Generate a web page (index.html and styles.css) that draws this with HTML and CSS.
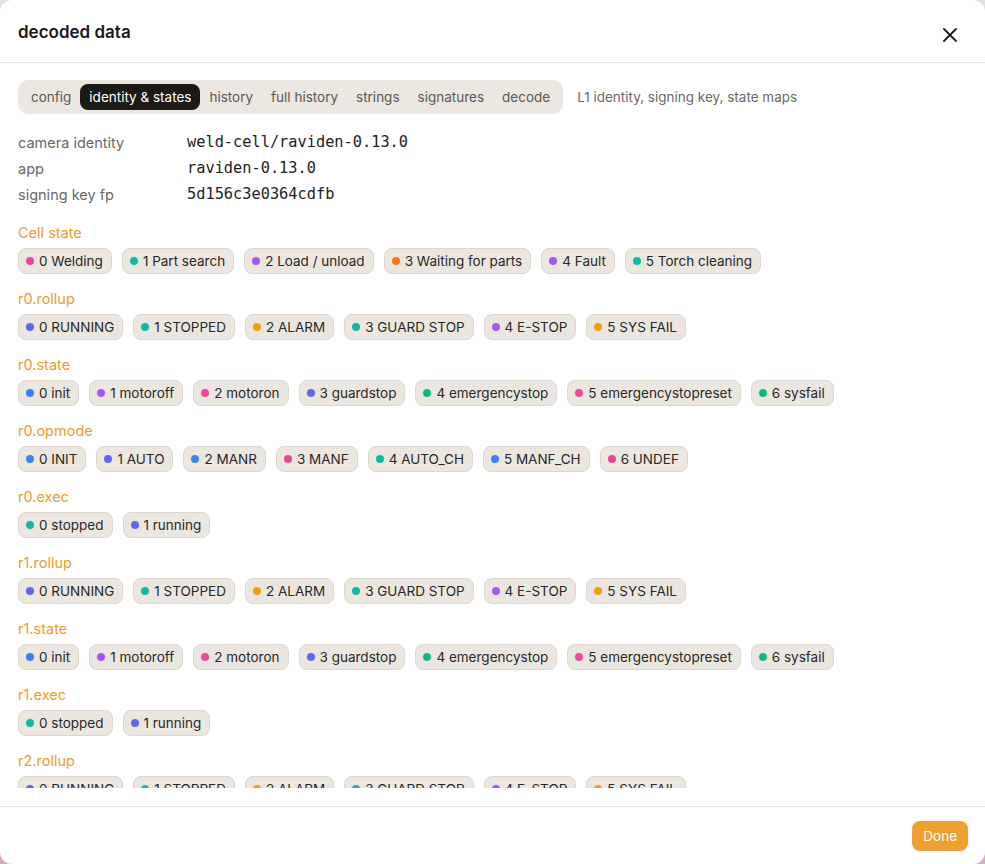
FILE: index.html
```html
<!DOCTYPE html>
<html lang="en">
<head>
<meta charset="utf-8">
<title>decoded data</title>
<link rel="stylesheet" href="styles.css">
</head>
<body>
<div class="dialog">
  <header class="dialog-head">
    <h1 class="dialog-title">decoded data</h1>
    <button class="close-btn" aria-label="Close">
      <svg width="14" height="14" viewBox="0 0 14 14"><path d="M1 1L13 13M13 1L1 13" stroke="#1c1c1c" stroke-width="1.8" stroke-linecap="round"/></svg>
    </button>
  </header>

  <main class="dialog-body">
    <div class="scroll">
      <div class="tabs-row">
        <nav class="tabs">
          <span class="tab">config</span>
          <span class="tab active">identity &amp; states</span>
          <span class="tab">history</span>
          <span class="tab">full history</span>
          <span class="tab">strings</span>
          <span class="tab">signatures</span>
          <span class="tab">decode</span>
        </nav>
        <span class="tabs-desc">L1 identity, signing key, state maps</span>
      </div>

      <dl class="kv">
        <dt>camera identity</dt><dd>weld-cell/raviden-0.13.0</dd>
        <dt>app</dt><dd>raviden-0.13.0</dd>
        <dt>signing key fp</dt><dd>5d156c3e0364cdfb</dd>
      </dl>

      <section class="map">
        <h2>Cell state</h2>
        <div class="chips">
          <span class="chip"><i class="dot pink"></i>0 Welding</span>
          <span class="chip"><i class="dot teal"></i>1 Part search</span>
          <span class="chip"><i class="dot purple"></i>2 Load / unload</span>
          <span class="chip"><i class="dot orange"></i>3 Waiting for parts</span>
          <span class="chip"><i class="dot purple"></i>4 Fault</span>
          <span class="chip"><i class="dot teal"></i>5 Torch cleaning</span>
        </div>
      </section>

      <section class="map">
        <h2>r0.rollup</h2>
        <div class="chips">
          <span class="chip"><i class="dot indigo"></i>0 RUNNING</span>
          <span class="chip"><i class="dot teal"></i>1 STOPPED</span>
          <span class="chip"><i class="dot amber"></i>2 ALARM</span>
          <span class="chip"><i class="dot teal"></i>3 GUARD STOP</span>
          <span class="chip"><i class="dot purple"></i>4 E-STOP</span>
          <span class="chip"><i class="dot amber"></i>5 SYS FAIL</span>
        </div>
      </section>

      <section class="map">
        <h2>r0.state</h2>
        <div class="chips">
          <span class="chip"><i class="dot blue"></i>0 init</span>
          <span class="chip"><i class="dot purple"></i>1 motoroff</span>
          <span class="chip"><i class="dot pink"></i>2 motoron</span>
          <span class="chip"><i class="dot indigo"></i>3 guardstop</span>
          <span class="chip"><i class="dot emerald"></i>4 emergencystop</span>
          <span class="chip"><i class="dot pink"></i>5 emergencystopreset</span>
          <span class="chip"><i class="dot emerald"></i>6 sysfail</span>
        </div>
      </section>

      <section class="map">
        <h2>r0.opmode</h2>
        <div class="chips">
          <span class="chip"><i class="dot blue"></i>0 INIT</span>
          <span class="chip"><i class="dot indigo"></i>1 AUTO</span>
          <span class="chip"><i class="dot blue"></i>2 MANR</span>
          <span class="chip"><i class="dot pink"></i>3 MANF</span>
          <span class="chip"><i class="dot teal"></i>4 AUTO_CH</span>
          <span class="chip"><i class="dot blue"></i>5 MANF_CH</span>
          <span class="chip"><i class="dot pink"></i>6 UNDEF</span>
        </div>
      </section>

      <section class="map">
        <h2>r0.exec</h2>
        <div class="chips">
          <span class="chip"><i class="dot teal"></i>0 stopped</span>
          <span class="chip"><i class="dot indigo"></i>1 running</span>
        </div>
      </section>

      <section class="map">
        <h2>r1.rollup</h2>
        <div class="chips">
          <span class="chip"><i class="dot indigo"></i>0 RUNNING</span>
          <span class="chip"><i class="dot teal"></i>1 STOPPED</span>
          <span class="chip"><i class="dot amber"></i>2 ALARM</span>
          <span class="chip"><i class="dot teal"></i>3 GUARD STOP</span>
          <span class="chip"><i class="dot purple"></i>4 E-STOP</span>
          <span class="chip"><i class="dot amber"></i>5 SYS FAIL</span>
        </div>
      </section>

      <section class="map">
        <h2>r1.state</h2>
        <div class="chips">
          <span class="chip"><i class="dot blue"></i>0 init</span>
          <span class="chip"><i class="dot purple"></i>1 motoroff</span>
          <span class="chip"><i class="dot pink"></i>2 motoron</span>
          <span class="chip"><i class="dot indigo"></i>3 guardstop</span>
          <span class="chip"><i class="dot emerald"></i>4 emergencystop</span>
          <span class="chip"><i class="dot pink"></i>5 emergencystopreset</span>
          <span class="chip"><i class="dot emerald"></i>6 sysfail</span>
        </div>
      </section>

      <section class="map">
        <h2>r1.exec</h2>
        <div class="chips">
          <span class="chip"><i class="dot teal"></i>0 stopped</span>
          <span class="chip"><i class="dot indigo"></i>1 running</span>
        </div>
      </section>

      <section class="map">
        <h2>r2.rollup</h2>
        <div class="chips">
          <span class="chip"><i class="dot indigo"></i>0 RUNNING</span>
          <span class="chip"><i class="dot teal"></i>1 STOPPED</span>
          <span class="chip"><i class="dot amber"></i>2 ALARM</span>
          <span class="chip"><i class="dot teal"></i>3 GUARD STOP</span>
          <span class="chip"><i class="dot purple"></i>4 E-STOP</span>
          <span class="chip"><i class="dot amber"></i>5 SYS FAIL</span>
        </div>
      </section>
    </div>
  </main>

  <footer class="dialog-foot">
    <button class="done-btn">Done</button>
  </footer>
</div>
</body>
</html>
```

FILE: styles.css
```css
* { box-sizing: border-box; }

html, body {
  margin: 0;
  height: 100%;
}

body {
  background: linear-gradient(to bottom, #e4e2e0 0%, #d8c4cc 70%, #d6a9c0 100%);
  font-family: Inter, "Noto Sans", sans-serif;
  color: #1f1f1f;
  overflow: hidden;
}

.dialog {
  height: 100vh;
  background: #fff;
  border-radius: 12px;
  display: flex;
  flex-direction: column;
}

/* header */
.dialog-head {
  height: 63px;
  flex: none;
  display: flex;
  align-items: center;
  justify-content: space-between;
  padding: 0 28px 0 18px;
  border-bottom: 1px solid #ece8e2;
}

.dialog-title {
  margin: 0;
  font-size: 17px;
  font-weight: 600;
  color: #1a1a1a;
  position: relative;
  top: 1px;
}

.close-btn {
  border: 0;
  background: none;
  padding: 0;
  width: 14px;
  height: 14px;
  display: flex;
  margin-top: 8px;
}

/* body */
.dialog-body {
  flex: 1;
  min-height: 0;
  display: flex;
  flex-direction: column;
  padding: 17px 18px 18px;
}

.scroll {
  flex: 1;
  min-height: 0;
  overflow: hidden;
}

.tabs-row {
  display: flex;
  align-items: center;
  gap: 14px;
}

.tabs {
  display: flex;
  background: #ece7e1;
  border-radius: 10px;
  padding: 4px;
  height: 34px;
  align-items: center;
}

.tab {
  height: 26px;
  display: flex;
  align-items: center;
  padding: 0 9px;
  font-size: 13.5px;
  color: #5c5954;
  border-radius: 8px;
}

.tab.active {
  background: #1c1a17;
  color: #fff;
}

.tabs-desc {
  font-size: 13.5px;
  color: #6b6864;
}

/* identity */
.kv {
  display: grid;
  grid-template-columns: 169px 1fr;
  grid-auto-rows: 26px;
  margin: 15px 0 0;
  align-items: center;
}

.kv dt {
  font-size: 14.5px;
  color: #6b6864;
}

.kv dd {
  margin: 0;
  font-family: "DejaVu Sans Mono", "Liberation Mono", monospace;
  font-size: 15.3px;
  color: #222;
}

/* state maps */
.map {
  margin-top: 15px;
}

.kv + .map {
  margin-top: 16px;
}

.map h2 {
  margin: 0;
  font-size: 14.5px;
  font-weight: 400;
  line-height: 20px;
  color: #f09a2b;
}

.chips {
  display: flex;
  flex-wrap: wrap;
  gap: 10px;
  margin-top: 5px;
}

.chip {
  height: 26px;
  display: inline-flex;
  align-items: center;
  gap: 5px;
  padding: 0 8px 0 7px;
  background: #ebe6e0;
  border: 1px solid #dcd6ce;
  border-radius: 8px;
  font-size: 13.5px;
  color: #2a2826;
  white-space: pre;
}

.dot {
  width: 8px;
  height: 8px;
  border-radius: 50%;
  flex: none;
}

.pink { background: #ec4899; }
.teal { background: #14b8a6; }
.purple { background: #a855f7; }
.orange { background: #f97316; }
.indigo { background: #6366f1; }
.amber { background: #f59e0b; }
.blue { background: #3b82f6; }
.emerald { background: #10b981; }

/* footer */
.dialog-foot {
  flex: none;
  height: 58px;
  border-top: 1px solid #ece8e2;
  display: flex;
  justify-content: flex-end;
  align-items: center;
  padding: 0 17px 0 0;
}

.done-btn {
  height: 30px;
  padding: 0 11px;
  border: 0;
  border-radius: 8px;
  background: #f0a030;
  color: #fff;
  font-family: Inter, "Noto Sans", sans-serif;
  font-size: 13.5px;
}
```
